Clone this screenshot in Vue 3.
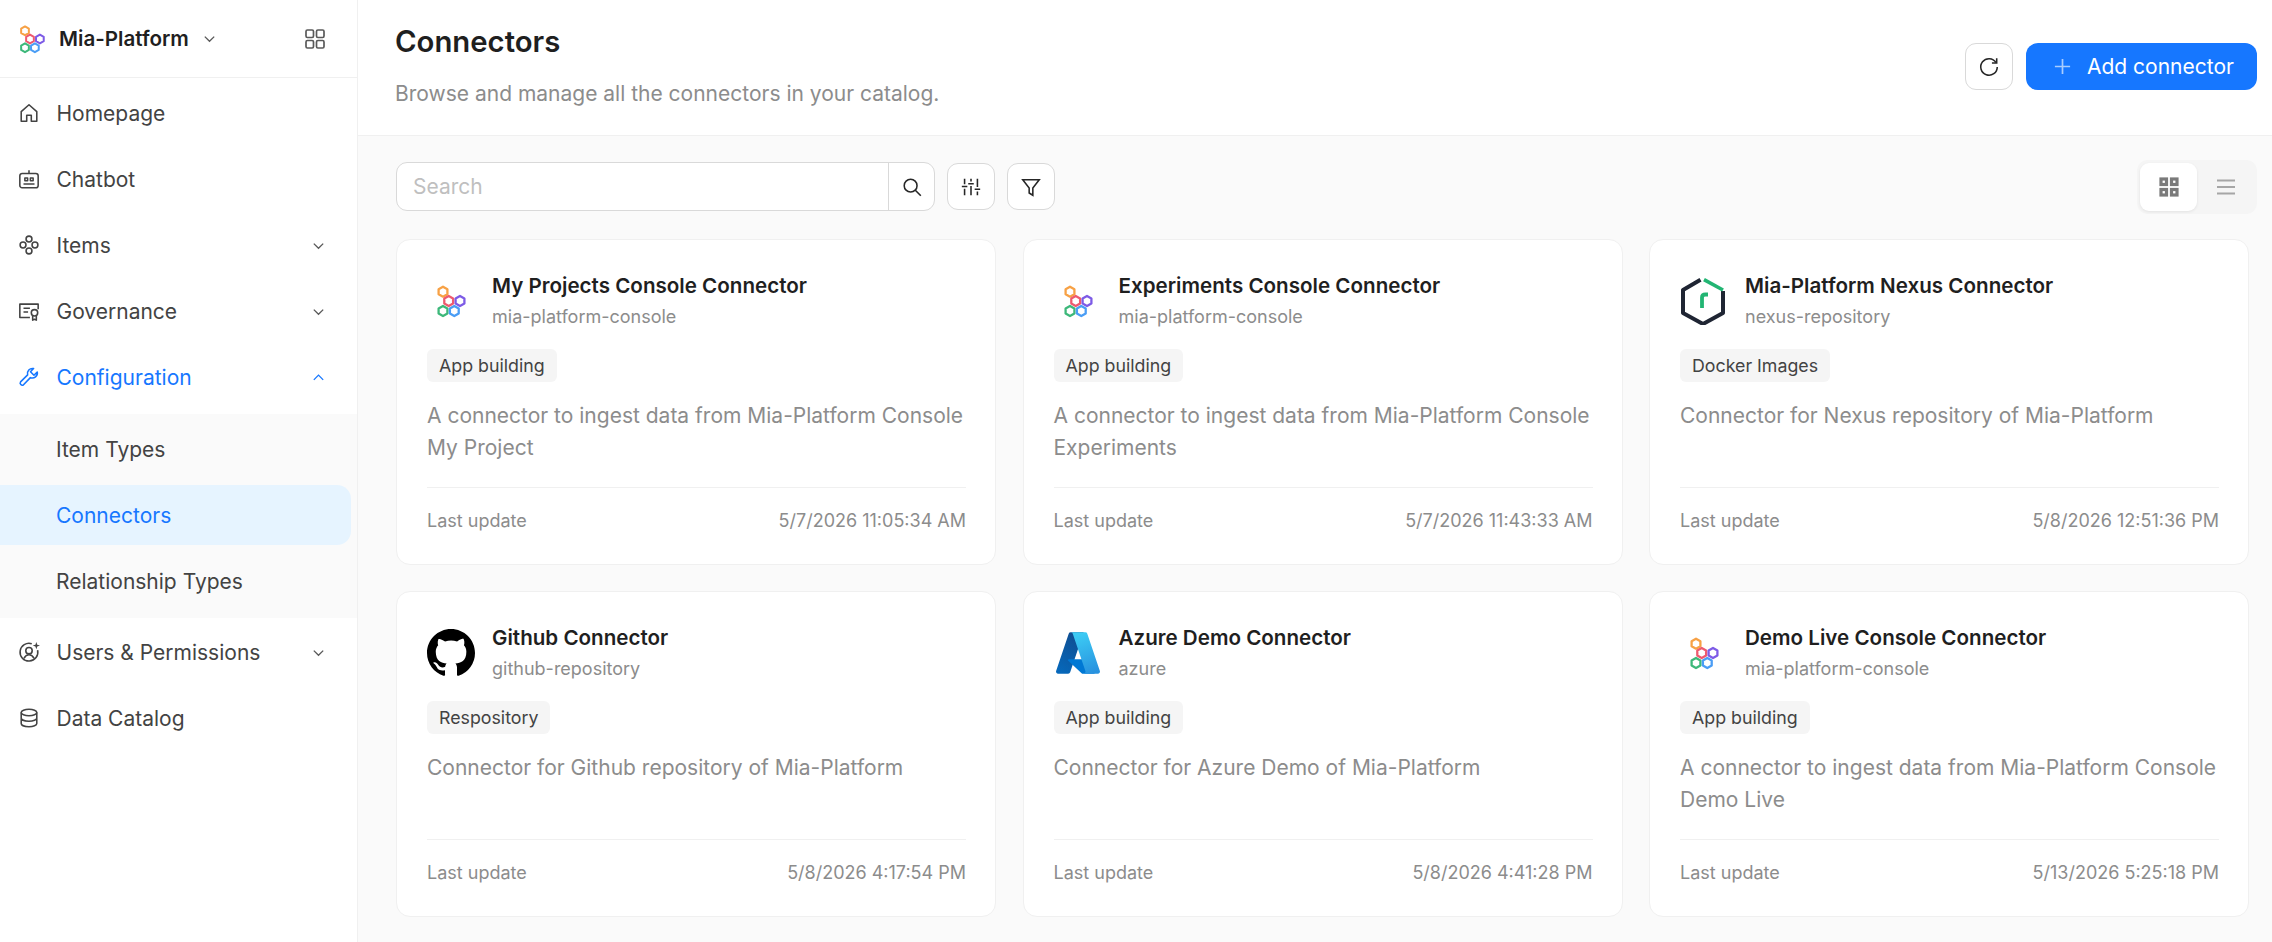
<template>
  <div class="app">
    <svg width="0" height="0" class="defs">
      <defs>
        <symbol id="mia" viewBox="0 0 48 48">
          <g fill="none" stroke-width="2.3" stroke-linejoin="round">
            <path v-for="h in miaHexes" :key="h.color" :stroke="h.color" :transform="`translate(${h.x} ${h.y})`" d="M0-5 4.4-2.5V2.5L0 5-4.4 2.5V-2.5Z" />
          </g>
        </symbol>
      </defs>
    </svg>

    <aside class="sidebar">
      <div class="brand">
        <svg class="brand-logo"><use href="#mia" /></svg>
        <span class="brand-name">Mia-Platform</span>
        <svg class="chev brand-chev" viewBox="0 0 16 16"><path d="M3 6l5 5 5-5" /></svg>
        <svg class="brand-grid" viewBox="0 0 20 20">
          <rect x="1" y="1" width="7.5" height="7.5" rx="1.4" />
          <rect x="11.5" y="1" width="7.5" height="7.5" rx="1.4" />
          <rect x="1" y="11.5" width="7.5" height="7.5" rx="1.4" />
          <rect x="11.5" y="11.5" width="7.5" height="7.5" rx="1.4" />
        </svg>
      </div>

      <nav class="menu">
        <template v-for="item in menu" :key="item.label">
          <div class="row" :class="{ open: item.open }">
            <svg class="nav-icon" viewBox="0 0 24 24" v-html="item.icon"></svg>
            <span class="label">{{ item.label }}</span>
            <svg v-if="item.arrow" class="chev" viewBox="0 0 16 16">
              <path :d="item.open ? 'M3 10.5l5-5 5 5' : 'M3 6l5 5 5-5'" />
            </svg>
          </div>
          <div v-if="item.children" class="submenu">
            <div v-for="c in item.children" :key="c" class="row sub" :class="{ selected: c === 'Connectors' }">
              <span class="label">{{ c }}</span>
            </div>
          </div>
        </template>
      </nav>
    </aside>

    <main class="main">
      <header class="top">
        <div>
          <h1>Connectors</h1>
          <p>Browse and manage all the connectors in your catalog.</p>
        </div>
        <div class="actions">
          <button class="icon-btn refresh">
            <svg viewBox="0 0 24 24"><path d="M19.6 8.2A9 9 0 1 0 21 13" /><path d="M20.4 3.6v5.2h-5.2" /></svg>
          </button>
          <button class="primary">
            <svg viewBox="0 0 20 20"><path d="M10 2v16M2 10h16" /></svg>
            Add connector
          </button>
        </div>
      </header>

      <section class="content">
        <div class="toolbar">
          <div class="search">
            <input type="text" placeholder="Search" />
            <button>
              <svg viewBox="0 0 24 24"><circle cx="10.5" cy="10.5" r="7" /><path d="M15.6 15.6l6 6" /></svg>
            </button>
          </div>
          <button class="icon-btn">
            <svg viewBox="0 0 24 24"><path d="M5 3v6M5 14v7M12 3v3M12 11v10M19 3v9M19 17v4M2 11.5h6M9 8.5h6M16 14.5h6" /></svg>
          </button>
          <button class="icon-btn">
            <svg viewBox="0 0 24 24"><path d="M3 4h18l-7 9v8l-4-2.5V13z" /></svg>
          </button>
          <div class="toggle">
            <span class="toggle-on">
              <svg viewBox="0 0 20 20" class="ic-grid">
                <rect x="2" y="2" width="5.5" height="5.5" />
                <rect x="12.5" y="2" width="5.5" height="5.5" />
                <rect x="2" y="12.5" width="5.5" height="5.5" />
                <rect x="12.5" y="12.5" width="5.5" height="5.5" />
              </svg>
            </span>
            <span class="toggle-off">
              <svg viewBox="0 0 20 20" class="ic-lines"><path d="M1 3.5h18M1 10h18M1 16.5h18" /></svg>
            </span>
          </div>
        </div>

        <div class="grid">
          <article v-for="c in connectors" :key="c.title" class="card">
            <div class="head">
              <svg v-if="c.logo === 'mia'" class="logo"><use href="#mia" /></svg>
              <svg v-else-if="c.logo === 'nexus'" class="logo" viewBox="0 0 48 48" fill="none">
                <path d="M20.5 2.8 3 13v23l20 11 20-11V14" stroke="#1f2533" stroke-width="4" stroke-linejoin="round" />
                <path d="M24 2.6 43 13" stroke="#22b573" stroke-width="3.6" />
                <path d="M22 31V20.5c0-2 1.4-3 3.5-3H28" stroke="#22b573" stroke-width="3.8" />
              </svg>
              <svg v-else-if="c.logo === 'github'" class="logo" viewBox="0 0 16 16">
                <path fill-rule="evenodd" d="M8 0C3.58 0 0 3.58 0 8c0 3.54 2.29 6.53 5.47 7.59.4.07.55-.17.55-.38 0-.19-.01-.82-.01-1.49-2.01.37-2.53-.49-2.69-.94-.09-.23-.48-.94-.82-1.13-.28-.15-.68-.52-.01-.53.63-.01 1.08.58 1.23.82.72 1.21 1.87.87 2.33.66.07-.52.28-.87.51-1.07-1.78-.2-3.64-.89-3.64-3.95 0-.87.31-1.59.82-2.15-.08-.2-.36-1.02.08-2.12 0 0 .67-.21 2.2.82.64-.18 1.32-.27 2-.27.68 0 1.36.09 2 .27 1.53-1.04 2.2-.82 2.2-.82.44 1.1.16 1.92.08 2.12.51.56.82 1.27.82 2.15 0 3.07-1.87 3.75-3.65 3.95.29.25.54.73.54 1.48 0 1.07-.01 1.93-.01 2.2 0 .21.15.46.55.38A8.013 8.013 0 0016 8c0-4.42-3.58-8-8-8z" />
              </svg>
              <svg v-else class="logo" viewBox="0 0 96 96">
                <defs>
                  <linearGradient id="azA" x1="60.9" y1="6.7" x2="7" y2="87.4" gradientUnits="userSpaceOnUse">
                    <stop offset="0" stop-color="#114a8b" /><stop offset="1" stop-color="#0669bc" />
                  </linearGradient>
                  <linearGradient id="azB" x1="46.2" y1="12.1" x2="75" y2="88.6" gradientUnits="userSpaceOnUse">
                    <stop offset="0" stop-color="#3ccbf4" /><stop offset="1" stop-color="#2892df" />
                  </linearGradient>
                </defs>
                <path fill="url(#azA)" d="M33.338 6.544h26.038l-27.03 80.087a4.152 4.152 0 0 1-3.933 2.824H8.149a4.145 4.145 0 0 1-3.928-5.47L29.404 9.368a4.152 4.152 0 0 1 3.934-2.825z" />
                <path fill="#0078d4" d="M71.175 60.261h-41.29a1.911 1.911 0 0 0-1.305 3.309l26.532 24.764a4.171 4.171 0 0 0 2.846 1.121h23.38z" />
                <path fill="url(#azB)" d="M66.595 9.364a4.145 4.145 0 0 0-3.928-2.82H33.648a4.146 4.146 0 0 1 3.928 2.82l25.184 74.62a4.146 4.146 0 0 1-3.928 5.472h29.02a4.146 4.146 0 0 0 3.927-5.472z" />
              </svg>
              <div class="titles">
                <div class="title">{{ c.title }}</div>
                <div class="subtitle">{{ c.sub }}</div>
              </div>
            </div>
            <span class="tag">{{ c.tag }}</span>
            <p class="desc">{{ c.desc }}</p>
            <div class="foot">
              <span>Last update</span>
              <span>{{ c.date }}</span>
            </div>
          </article>
        </div>
      </section>
    </main>
  </div>
</template>

<script setup>
const miaHexes = [
  { x: 16, y: 14.7, color: "#f7a145" },
  { x: 21.7, y: 24, color: "#ee5a6f" },
  { x: 33, y: 24, color: "#7d5be6" },
  { x: 16, y: 34, color: "#3db87a" },
  { x: 27.3, y: 34, color: "#4a9df5" },
];

const menu = [
  {
    label: "Homepage",
    icon: '<path d="M3.5 10.5 12 3l8.5 7.5V21h-6v-6.5h-5V21h-6z"/>',
  },
  {
    label: "Chatbot",
    icon: '<rect x="2" y="6" width="20" height="15.5" rx="2.5"/><path d="M12 2.5V6M7.5 11h3v3h-3zM13.5 11h3v3h-3zM6 17.5h12"/>',
  },
  {
    label: "Items",
    arrow: true,
    icon: '<circle cx="12" cy="5.5" r="3.2"/><circle cx="12" cy="18.5" r="3.2"/><circle cx="5.5" cy="12" r="3.2"/><circle cx="18.5" cy="12" r="3.2"/>',
  },
  {
    label: "Governance",
    arrow: true,
    icon: '<path d="M13 19H2V4.5h20V10"/><path d="M6 9h7M6 13h5"/><circle cx="18" cy="14" r="3.5"/><path d="M16 17.5V22l2-1 2 1v-4.5"/>',
  },
  {
    label: "Configuration",
    arrow: true,
    open: true,
    icon: '<path d="M21 6.5a5.5 5.5 0 0 1-7.5 6.2L6 20.5a2.3 2.3 0 0 1-3.2-3.2l7.7-7.6A5.5 5.5 0 0 1 17 2.8l-3.4 3.5 3.8 3.8z"/>',
    children: ["Item Types", "Connectors", "Relationship Types"],
  },
  {
    label: "Users & Permissions",
    arrow: true,
    icon: '<path d="M15 3A9.7 9.7 0 1 0 21.4 10"/><circle cx="12" cy="10.5" r="3.5"/><path d="M6.5 19c1.3-2.5 3-4 5.5-4s4.2 1.5 5.5 4"/><path fill="#434343" stroke="none" d="M20 1l1 3 3 1-3 1-1 3-1-3-3-1 3-1z"/>',
  },
  {
    label: "Data Catalog",
    icon: '<ellipse cx="12" cy="6" rx="8.5" ry="3.5"/><path d="M3.5 6v12c0 2 3.8 3.5 8.5 3.5s8.5-1.5 8.5-3.5V6M3.5 12c0 2 3.8 3.5 8.5 3.5s8.5-1.5 8.5-3.5"/>',
  },
];

const connectors = [
  {
    logo: "mia",
    title: "My Projects Console Connector",
    sub: "mia-platform-console",
    tag: "App building",
    desc: "A connector to ingest data from Mia-Platform Console My Project",
    date: "5/7/2026 11:05:34 AM",
  },
  {
    logo: "mia",
    title: "Experiments Console Connector",
    sub: "mia-platform-console",
    tag: "App building",
    desc: "A connector to ingest data from Mia-Platform Console Experiments",
    date: "5/7/2026 11:43:33 AM",
  },
  {
    logo: "nexus",
    title: "Mia-Platform Nexus Connector",
    sub: "nexus-repository",
    tag: "Docker Images",
    desc: "Connector for Nexus repository of Mia-Platform",
    date: "5/8/2026 12:51:36 PM",
  },
  {
    logo: "github",
    title: "Github Connector",
    sub: "github-repository",
    tag: "Respository",
    desc: "Connector for Github repository of Mia-Platform",
    date: "5/8/2026 4:17:54 PM",
  },
  {
    logo: "azure",
    title: "Azure Demo Connector",
    sub: "azure",
    tag: "App building",
    desc: "Connector for Azure Demo of Mia-Platform",
    date: "5/8/2026 4:41:28 PM",
  },
  {
    logo: "mia",
    title: "Demo Live Console Connector",
    sub: "mia-platform-console",
    tag: "App building",
    desc: "A connector to ingest data from Mia-Platform Console Demo Live",
    date: "5/13/2026 5:25:18 PM",
  },
];
</script>

<style scoped>
.app {
  display: flex;
  height: 942px;
  overflow: hidden;
  font-family: Inter, "Liberation Sans", sans-serif;
  color: #262626;
  background: #fff;
}

.defs {
  position: absolute;
}

.sidebar {
  width: 357px;
  flex: none;
  border-right: 1px solid #f0f0f0;
  background: #fff;
}

.brand {
  display: flex;
  align-items: center;
  height: 77px;
  padding-left: 11px;
  padding-right: 32px;
  border-bottom: 1px solid #f0f0f0;
}

.brand-logo {
  width: 42px;
  height: 42px;
}

.brand-name {
  margin-left: 6px;
  font-size: 20.6px;
  font-weight: 600;
  color: #1f1f1f;
}

.brand-chev {
  margin-left: 13px;
}

.brand-grid {
  margin-left: auto;
  width: 20px;
  height: 20px;
  fill: none;
  stroke: #595959;
  stroke-width: 1.7;
}

.chev {
  width: 15px;
  height: 15px;
  fill: none;
  stroke: #595959;
  stroke-width: 1.4;
  flex: none;
}

.menu {
  padding-top: 5px;
}

.row {
  display: flex;
  align-items: center;
  height: 60px;
  margin-bottom: 6px;
  margin-right: 6px;
  padding-left: 18px;
  padding-right: 25px;
  font-size: 21px;
  color: #434343;
}

.row.open {
  color: #1677ff;
}

.row.open .chev,
.row.open .nav-icon {
  stroke: #1677ff;
}

.nav-icon {
  width: 22px;
  height: 22px;
  flex: none;
  fill: none;
  stroke: #434343;
  stroke-width: 1.7;
  stroke-linejoin: round;
}

.label {
  margin-left: 16.5px;
  flex: 1;
}

.submenu {
  margin-top: 7px;
  margin-bottom: 4px;
  padding: 5px 0 7px;
  background: #fafafa;
}

.row.sub {
  padding-left: 39px;
}

.row.sub .label {
  margin-left: 17px;
}

.row.sub:last-child {
  margin-bottom: 0;
}

.row.selected {
  background: #e6f4ff;
  color: #1677ff;
  border-radius: 0 14px 14px 0;
}

.main {
  flex: 1;
  min-width: 0;
  background: #fafafa;
}

.top {
  display: flex;
  align-items: center;
  justify-content: space-between;
  padding: 22px 15px 26px 37px;
  background: #fff;
  border-bottom: 1px solid #f0f0f0;
}

h1 {
  margin: 0;
  font-size: 29.3px;
  line-height: 40px;
  font-weight: 600;
  color: #1f1f1f;
}

.top p {
  margin: 17px 0 0;
  font-size: 21px;
  line-height: 30px;
  color: #8c8c8c;
}

.actions {
  display: flex;
  align-items: center;
  gap: 13px;
  margin-top: 1px;
}

button {
  font-family: inherit;
  cursor: pointer;
}

.icon-btn {
  display: flex;
  align-items: center;
  justify-content: center;
  width: 48px;
  height: 47px;
  padding: 0;
  background: #fff;
  border: 1.5px solid #d9d9d9;
  border-radius: 11px;
}

.icon-btn svg,
.search svg {
  width: 22px;
  height: 22px;
  fill: none;
  stroke: #262626;
  stroke-width: 1.7;
}

.primary {
  display: flex;
  align-items: center;
  gap: 15px;
  width: 231px;
  height: 47px;
  padding: 0 0 0 27px;
  border: none;
  border-radius: 12px;
  background: #1677ff;
  color: #fff;
  font-size: 21px;
}

.primary svg {
  width: 19px;
  height: 19px;
  fill: none;
  stroke: #a9cdff;
  stroke-width: 1.8;
}

.content {
  padding: 23.5px 15px 0 38px;
}

.toolbar {
  display: flex;
  align-items: center;
  gap: 12px;
  height: 54px;
  margin-bottom: 25px;
}

.search {
  display: flex;
  width: 537px;
  height: 47px;
  background: #fff;
  border: 1.5px solid #d9d9d9;
  border-radius: 11px;
}

.search input {
  flex: 1;
  min-width: 0;
  padding: 0 16px;
  border: none;
  outline: none;
  background: transparent;
  font-family: inherit;
  font-size: 21px;
  color: #262626;
}

.search input::placeholder {
  color: #bfbfbf;
}

.search button {
  display: flex;
  align-items: center;
  justify-content: center;
  width: 46px;
  padding: 0;
  background: transparent;
  border: none;
  border-left: 1.5px solid #d9d9d9;
}

.toggle {
  display: flex;
  align-items: center;
  margin-left: auto;
  width: 120px;
  height: 54px;
  padding: 3px;
  box-sizing: border-box;
  background: #f5f5f5;
  border-radius: 11px;
}

.toggle-on,
.toggle-off {
  display: flex;
  align-items: center;
  justify-content: center;
  width: 57px;
  height: 48px;
}

.toggle-on {
  background: #fff;
  border-radius: 9px;
  box-shadow: 0 1px 3px rgba(0, 0, 0, 0.08);
}

.ic-grid {
  width: 20px;
  height: 20px;
  fill: #fff;
  stroke: #7a7a7a;
  stroke-width: 3.2;
}

.ic-lines {
  width: 20px;
  height: 20px;
  fill: none;
  stroke: #a6a6a6;
  stroke-width: 2.2;
}

.grid {
  display: grid;
  grid-template-columns: repeat(3, 1fr);
  column-gap: 26.5px;
  row-gap: 26.5px;
  margin-right: 8px;
}

.card {
  box-sizing: border-box;
  height: 326px;
  padding: 37px 29px 0 30px;
  background: #fff;
  border: 1px solid #f0f0f0;
  border-radius: 14px;
}

.head {
  display: flex;
  align-items: center;
  height: 48px;
  margin-bottom: 24px;
}

.logo {
  width: 48px;
  height: 48px;
  flex: none;
}

.titles {
  margin-left: 17px;
}

.title {
  font-size: 20.6px;
  line-height: 31px;
  font-weight: 600;
  color: #1f1f1f;
}

.subtitle {
  font-size: 18px;
  line-height: 31px;
  color: #8c8c8c;
}

.tag {
  display: inline-block;
  height: 33px;
  padding: 0 12px;
  font-size: 17.8px;
  line-height: 33px;
  color: #434343;
  background: #f5f5f5;
  border-radius: 6px;
  vertical-align: top;
}

.desc {
  height: 64px;
  margin: 18px 0 23px;
  font-size: 21px;
  line-height: 32px;
  color: #8c8c8c;
}

.foot {
  display: flex;
  justify-content: space-between;
  padding-top: 21px;
  border-top: 1px solid #f0f0f0;
  font-size: 18px;
  line-height: 24px;
  color: #8c8c8c;
}
</style>
